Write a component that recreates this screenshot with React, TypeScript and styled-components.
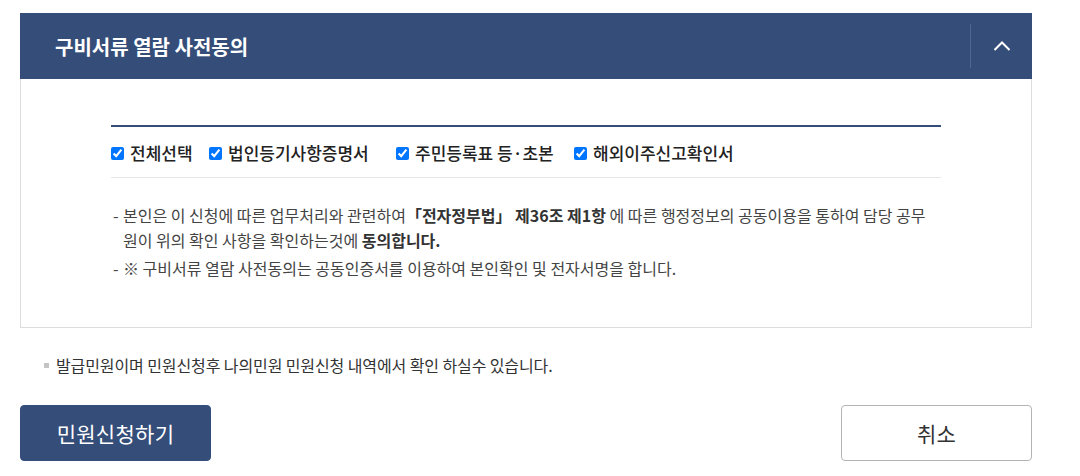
import styled, { createGlobalStyle } from 'styled-components'

const GlobalStyle = createGlobalStyle`
  body {
    margin: 0;
    background: #fff;
    font-family: "Noto Sans CJK KR", "Noto Sans", sans-serif;
    color: #333;
  }
`

const Page = styled.div`
  width: 1012px;
  padding: 13px 48px 0 20px;
`

const Panel = styled.section`
  display: flex;
  flex-direction: column;
`

const PanelHead = styled.div`
  display: flex;
  align-items: center;
  height: 66px;
  background: #344d79;
`

const PanelTitle = styled.h2`
  flex: 1;
  margin: 0;
  padding-left: 35px;
  font-size: 20px;
  font-weight: 700;
  color: #fff;
`

const Toggle = styled.button`
  display: flex;
  align-items: center;
  justify-content: center;
  width: 62px;
  height: 44px;
  padding: 0;
  border: 0;
  border-left: 1px solid rgba(255, 255, 255, 0.15);
  background: transparent;
  cursor: pointer;
`

const PanelBody = styled.div`
  padding: 46px 90px 46px;
  border: 1px solid #dcdcdc;
  border-top: 0;
`

const CheckRow = styled.div`
  display: flex;
  align-items: center;
  height: 50px;
  border-top: 2px solid #344d79;
  border-bottom: 1px solid #e6e6e6;
`

const CheckItem = styled.label<{ $w?: number }>`
  display: flex;
  align-items: center;
  gap: 6px;
  width: ${p => (p.$w ? `${p.$w}px` : 'auto')};
  font-size: 17px;
  font-weight: 500;
  color: #222;

  & > input {
    width: 13px;
    height: 13px;
    margin: 2px 0 0;
  }
`

const Notes = styled.ul`
  margin: 25px 0 0;
  padding: 0 14px 0 0;
  list-style: none;
  display: flex;
  flex-direction: column;
  gap: 3px;
`

const NoteItem = styled.li`
  position: relative;
  padding-left: 12px;
  font-size: 16px;
  line-height: 25px;
  color: #444;

  &::before {
    content: '-';
    position: absolute;
    left: 2px;
    top: 0;
  }

  & b {
    font-weight: 700;
    color: #333;
  }
`

const Info = styled.p`
  display: flex;
  align-items: center;
  gap: 7px;
  margin: 25px 0 0 24px;
  font-size: 16px;
  line-height: 25px;
  color: #333;
  letter-spacing: -0.1px;

  &::before {
    content: '';
    width: 5px;
    height: 5px;
    background: #c4c4c4;
  }
`

const Actions = styled.div`
  display: flex;
  justify-content: space-between;
  margin-top: 27px;
`

const Button = styled.button<{ $primary?: boolean }>`
  width: 191px;
  height: 56px;
  border-radius: 4px;
  border: 1px solid ${p => (p.$primary ? '#344d79' : '#b4b4b4')};
  background: ${p => (p.$primary ? '#344d79' : '#fff')};
  color: ${p => (p.$primary ? '#fff' : '#333')};
  font-family: inherit;
  font-size: 21px;
  letter-spacing: 0.3px;
  cursor: pointer;
`

const items = [
  { label: '전체선택', w: 98 },
  { label: '법인등기사항증명서', w: 187 },
  { label: '주민등록표 등·초본', w: 178 },
  { label: '해외이주신고확인서' },
]

const App = () => {
  return (
    <Page>
      <GlobalStyle />
      <Panel>
        <PanelHead>
          <PanelTitle>구비서류 열람 사전동의</PanelTitle>
          <Toggle aria-label="접기">
            <svg width="18" height="12" viewBox="0 0 18 12">
              <path d="M1.5 10 L9 2.5 L16.5 10" fill="none" stroke="#fff" strokeWidth="2" />
            </svg>
          </Toggle>
        </PanelHead>
        <PanelBody>
          <CheckRow>
            {items.map(item => (
              <CheckItem key={item.label} $w={item.w}>
                <input type="checkbox" defaultChecked />
                {item.label}
              </CheckItem>
            ))}
          </CheckRow>
          <Notes>
            <NoteItem>
              본인은 이 신청에 따른 업무처리와 관련하여<b>「전자정부법」 제36조 제1항</b> 에 따른 행정정보의 공동이용을 통하여 담당 공무원이 위의 확인 사항을 확인하는것에 <b>동의합니다.</b>
            </NoteItem>
            <NoteItem>※ 구비서류 열람 사전동의는 공동인증서를 이용하여 본인확인 및 전자서명을 합니다.</NoteItem>
          </Notes>
        </PanelBody>
      </Panel>
      <Info>발급민원이며 민원신청후 나의민원 민원신청 내역에서 확인 하실수 있습니다.</Info>
      <Actions>
        <Button $primary>민원신청하기</Button>
        <Button>취소</Button>
      </Actions>
    </Page>
  )
}

export default App
